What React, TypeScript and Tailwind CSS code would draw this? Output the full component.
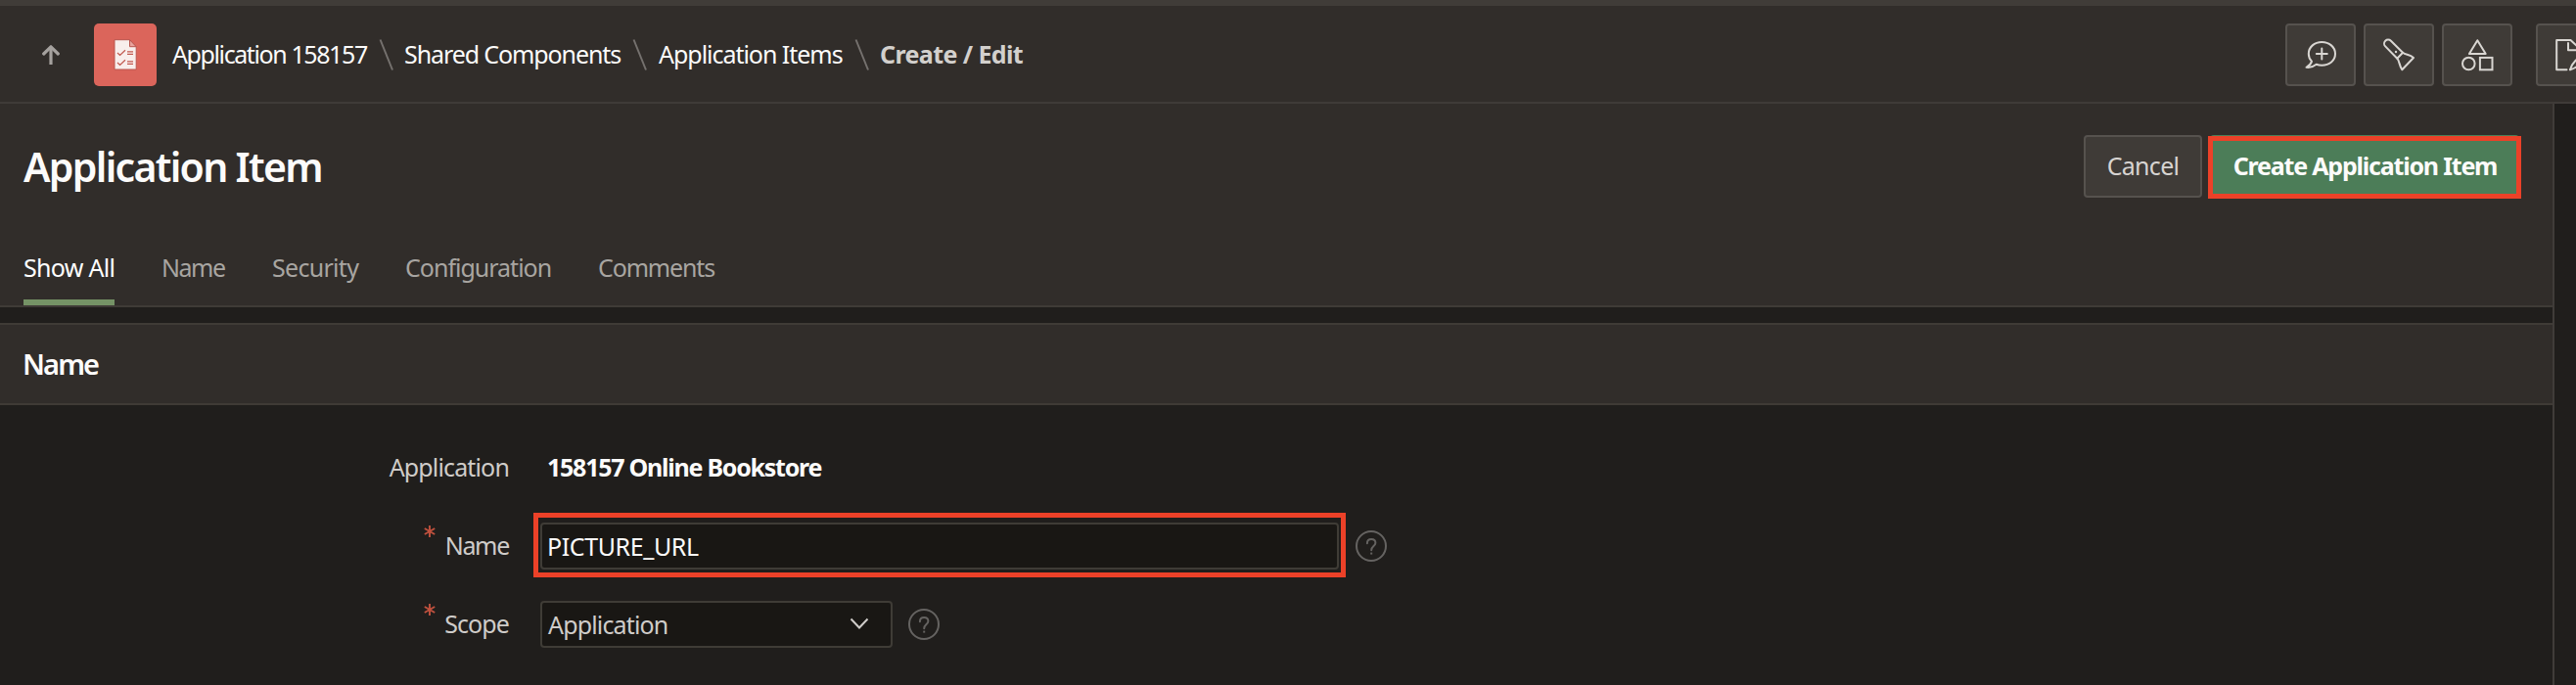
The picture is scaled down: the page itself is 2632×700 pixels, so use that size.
import type { ReactNode } from "react";

function ToolButton({ children }: { children: ReactNode }) {
  return (
    <button className="flex h-16 w-[72px] shrink-0 items-center justify-center rounded-[4px] border-2 border-[#56524e] bg-[#3f3b37]">
      <svg
        viewBox="0 0 32 32"
        className="size-8 overflow-visible text-[#d9d6d2]"
        fill="none"
        stroke="currentColor"
        strokeWidth="2"
        strokeLinejoin="round"
        strokeLinecap="round"
      >
        {children}
      </svg>
    </button>
  );
}

function Separator() {
  return (
    <svg viewBox="0 0 16 32" className="h-8 w-4 shrink-0" fill="none" stroke="#75716e" strokeWidth="2">
      <path d="M1.5 0.5 L14 31.5" />
    </svg>
  );
}

function Help() {
  return (
    <svg viewBox="0 0 32 32" className="size-8 shrink-0" fill="none" stroke="#656361" strokeWidth="2">
      <circle cx="16" cy="16" r="15" />
      <path d="M11.9 13.2 C11.9 10.6 13.6 9 16.2 9 C18.8 9 20.4 10.6 20.4 12.8 C20.4 16 16.2 16.2 16.2 20.2" strokeLinecap="round" />
      <path d="M15.2 23.6 h2" />
    </svg>
  );
}

function Required() {
  return (
    <svg viewBox="0 0 12 12" className="size-3" fill="none" stroke="#c0513e" strokeWidth="1.9">
      <path d="M6 0 V12 M0.8 3 L11.2 9 M11.2 3 L0.8 9" />
    </svg>
  );
}

export default function App() {
  return (
    <div className="flex h-[700px] w-full flex-col overflow-hidden bg-[#201e1c] font-['Noto_Sans',sans-serif] text-[25px] leading-8 whitespace-nowrap text-[#fcfbfa]">
      <header className="flex h-[106px] shrink-0 items-center justify-between border-t-[6px] border-b-2 border-t-[#403c38] border-b-[#3f3b38] bg-[#312d2a] pt-0.5">
        <div className="flex items-center">
          <svg viewBox="0 0 18 20" className="ml-[43px] h-5 w-[18px]" fill="none" stroke="#a5a19e" strokeWidth="3.2">
            <path d="M9 19.5 V2.5" strokeLinecap="round" />
            <path d="M1.7 9 L9 1.8 L16.3 9" strokeLinecap="round" strokeLinejoin="round" />
          </svg>
          <div className="ml-[35px] flex size-16 items-center justify-center rounded-[5px] bg-[#db655b]">
            <svg viewBox="0 0 24 32" className="h-8 w-6" fill="none" stroke="#b9564e" strokeWidth="1">
              <path d="M1 0.7 H16.5 L23.2 7.7 V31 H1 Z" fill="#f8eeec" />
              <path d="M16.5 0.7 V7.7 H23.2 Z" fill="#e9a39d" />
              <g stroke="#c15a50" strokeWidth="1.2">
                <path d="M4 14 L6.6 16.5 L12 11.3 M14 12.8 H20 M14 15.4 H20" />
                <path d="M4 24 L6.6 26.5 L12 21.3 M14 22.8 H20 M14 25.4 H20" />
              </g>
            </svg>
          </div>
          <nav className="ml-4 flex items-center">
            <a className="w-[211px] pb-0.5 tracking-[-1.4px]">Application 158157</a>
            <Separator />
            <a className="ml-[10px] w-[233px] pb-0.5 tracking-[-1.1px]">Shared Components</a>
            <Separator />
            <a className="ml-[11px] w-[200px] pb-0.5 tracking-[-1.03px]">Application Items</a>
            <Separator />
            <span className="ml-[10px] pb-0.5 font-bold tracking-[-0.6px] text-[#d3d0cd]">Create / Edit</span>
          </nav>
        </div>
        <div className="flex w-[297px] shrink-0 gap-2">
          <ToolButton>
            <path d="M7 22.6 C4.8 20.5 3.8 17.8 3.8 15 C3.8 8 9.8 3 17.3 3 S31 8 31 15 S25 26.7 17.3 26.7 C15.3 26.7 13.4 26.4 11.7 25.8 C9 28 5 29.3 1.5 28.8 C4.8 27 6.3 25 7 22.6 Z" />
            <path d="M17.3 9.5 V20.5 M11.8 15 H22.8" />
          </ToolButton>
          <ToolButton>
            <path d="M14.3 19.7 L2.2 7.4 A4 4 0 0 1 7.9 1.7 L20 13.8 Z" />
            <path d="M20 13.8 C23 16.2 27 15.5 31 19 L19.3 31.3 C16.3 27 16.8 22.5 14.3 19.7" />
            <circle cx="13" cy="13" r="1.2" fill="currentColor" stroke="none" />
          </ToolButton>
          <ToolButton>
            <path d="M16.3 1.2 L24.7 15 H7.9 Z" />
            <circle cx="7.3" cy="25" r="6.3" />
            <rect x="18.9" y="18.9" width="12.6" height="12.4" strokeLinejoin="miter" />
          </ToolButton>
          <div className="ml-4">
            <ToolButton>
              <path d="M11.5 31.2 H1.2 V1 H15.5 L25 10 M13 4 V11.2 H22 M15 31.2 C16 27.5 17 25.5 20 22.5 L27 15.5" />
              <path d="M15 31.2 C18 30.5 20 29.5 22 28" />
            </ToolButton>
          </div>
        </div>
      </header>

      <main className="flex w-[2610px] flex-1 flex-col border-r-2 border-[#403c39]">
        <section className="flex h-[208px] shrink-0 flex-col justify-between border-b-2 border-[#3f3b37] bg-[#312d2a] pl-6">
          <div className="mt-8 flex h-16 items-center justify-between pr-[34px]">
            <h1 className="text-[41px] font-semibold tracking-[-1.7px]">Application Item</h1>
            <div className="flex gap-2">
              <button className="h-16 w-[121px] rounded-[4px] border-2 border-[#56524e] bg-[#3f3b37] pb-0.5 tracking-[-0.7px] text-[#d7d4d1]">
                Cancel
              </button>
              <div className="relative">
                <button className="h-16 w-[316px] rounded-[4px] bg-[#4c7d58] pb-0.5 pl-px font-bold tracking-[-1.2px]">
                  Create Application Item
                </button>
                <div className="pointer-events-none absolute -inset-x-0.5 top-px h-16 border-[5px] border-[#ec4128]" />
              </div>
            </div>
          </div>
          <nav className="flex text-[#a8a5a1]">
            <a className="mr-12 flex h-[55px] w-[93px] flex-col justify-between text-white">
              <span className="tracking-[-0.7px]">Show All</span>
              <span className="h-1.5 bg-[#759366]" />
            </a>
            <a className="w-[113px] tracking-[-1.5px]">Name</a>
            <a className="w-[136px] tracking-[-0.7px]">Security</a>
            <a className="w-[197px] tracking-[-1px]">Configuration</a>
            <a className="tracking-[-1.15px]">Comments</a>
          </nav>
        </section>

        <section className="mt-4">
          <div className="flex h-[84px] items-center border-y-2 border-[#3f3b36] bg-[#312d2a] pl-[23px]">
            <h2 className="text-[29px] font-semibold tracking-[-1.9px]">Name</h2>
          </div>
          <div className="flex flex-col pt-6 text-[#cfccc9]">
            <div className="flex h-20 items-center">
              <label className="w-[520px] pb-0.5 text-right tracking-[-0.85px]">Application</label>
              <span className="ml-[39px] pb-0.5 font-bold tracking-[-1.25px] text-[#fcfbfa]">158157 Online Bookstore</span>
            </div>
            <div className="flex h-20 items-center">
              <label className="flex w-[520px] justify-end gap-[10px] pb-0.5 tracking-[-1.3px]">
                <span className="-mt-1"><Required /></span>
                Name
              </label>
              <div className="relative ml-8 flex h-12 w-[816px] items-center rounded-[4px] border-2 border-[#3f3c36] bg-[#191714] pl-[5px] tracking-[-0.4px] text-[#fcfbfa]">
                PICTURE_URL
                <div className="pointer-events-none absolute -top-3 -left-[9px] h-[66px] w-[830px] border-[5px] border-[#ec4128]" />
              </div>
              <div className="ml-[17px]"><Help /></div>
            </div>
            <div className="flex h-20 items-center">
              <label className="flex w-[520px] justify-end gap-[9px] pb-0.5 tracking-[-0.9px]">
                <span className="-mt-1"><Required /></span>
                Scope
              </label>
              <div className="ml-8 flex h-12 w-[360px] items-center justify-between rounded-[4px] border-2 border-[#3f3c36] bg-[#191714] pr-[22px] pl-1.5">
                <span className="tracking-[-0.85px]">Application</span>
                <svg viewBox="0 0 20 12" className="mb-0.5 h-3 w-5" fill="none" stroke="#cfccc9" strokeWidth="2">
                  <path d="M1.5 1.5 L10 10.5 L18.5 1.5" />
                </svg>
              </div>
              <div className="ml-4"><Help /></div>
            </div>
          </div>
        </section>
      </main>
    </div>
  );
}
